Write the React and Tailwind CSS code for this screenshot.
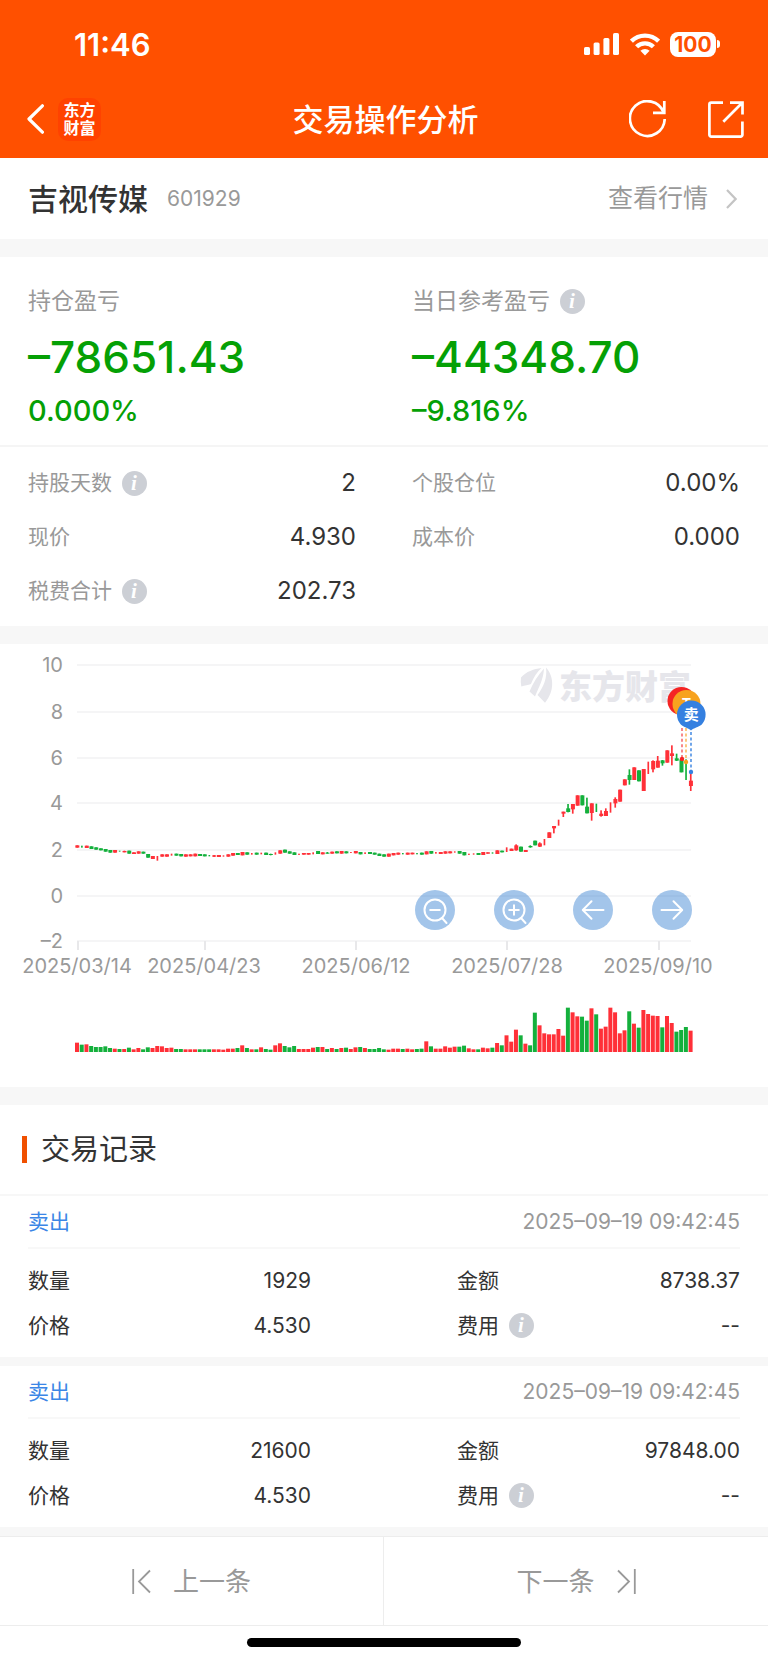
import React from 'react';

// [direction, volume, high, low, body top, body bottom]
// r = up day, g = down day. Without a body the whole range is filled.
const DAYS = [
  ['r', 28, 616, 623], ['g', 22, 617, 623, 620, 620], ['r', 23, 617, 624], ['g', 18, 619, 627], ['g', 15, 622, 629],
  ['g', 15, 625, 631], ['g', 17, 627, 635], ['g', 12, 630, 638], ['r', 10, 630, 638], ['g', 9, 632, 635, 634, 634],
  ['r', 9, 632, 637, 633, 637], ['g', 13, 632, 641], ['r', 8, 637, 642], ['r', 12, 634, 641], ['g', 8, 635, 641],
  ['g', 14, 642, 653], ['r', 12, 648, 657], ['r', 18, 648, 662, 655, 655], ['r', 17, 643, 650], ['r', 12, 643, 650],
  ['r', 13, 641, 647, 644, 644], ['g', 9, 641, 647], ['g', 9, 642, 649], ['r', 8, 643, 650], ['r', 8, 643, 649],
  ['r', 8, 641, 649], ['g', 8, 642, 648], ['g', 8, 643, 649], ['g', 8, 645, 649, 647, 647], ['r', 8, 645, 651, 646, 650],
  ['r', 8, 645, 651], ['r', 7, 646, 650, 648, 648], ['r', 10, 643, 650], ['r', 10, 639, 647], ['g', 12, 639, 645],
  ['r', 20, 636, 646], ['g', 12, 637, 644], ['r', 8, 639, 644, 641, 641], ['g', 8, 638, 644], ['r', 14, 638, 643, 641, 641],
  ['g', 9, 638, 645], ['g', 7, 641, 646, 642, 645], ['r', 20, 637, 644, 640, 640], ['r', 26, 631, 641], ['g', 18, 629, 638],
  ['g', 14, 634, 641], ['g', 18, 637, 645], ['r', 9, 641, 645, 643, 643], ['r', 9, 639, 644], ['r', 9, 639, 644],
  ['r', 13, 637, 643, 640, 640], ['g', 15, 633, 642], ['r', 15, 637, 643], ['g', 9, 636, 641, 638, 641], ['r', 12, 635, 641],
  ['g', 9, 634, 640], ['r', 12, 633, 641], ['g', 13, 634, 640], ['r', 9, 636, 639, 637, 637], ['r', 14, 633, 640],
  ['g', 15, 636, 643], ['r', 12, 637, 642, 640, 640], ['g', 9, 636, 642], ['g', 9, 638, 644], ['g', 12, 641, 648],
  ['g', 8, 643, 650], ['r', 7, 641, 650], ['r', 10, 639, 646], ['r', 10, 638, 644], ['g', 9, 639, 643, 641, 641],
  ['r', 10, 638, 644], ['r', 8, 638, 643], ['g', 9, 639, 643, 641, 641], ['g', 10, 638, 644], ['r', 32, 634, 643],
  ['g', 17, 633, 641], ['r', 10, 636, 641, 638, 638], ['r', 10, 636, 642], ['r', 17, 634, 641], ['r', 13, 634, 640],
  ['r', 16, 634, 638, 636, 636], ['g', 16, 633, 641], ['g', 19, 636, 646], ['r', 11, 641, 645, 643, 643], ['r', 8, 640, 644, 642, 642],
  ['g', 8, 639, 645], ['r', 13, 636, 645], ['r', 11, 637, 641], ['g', 13, 637, 641, 639, 639], ['r', 27, 631, 642],
  ['g', 20, 632, 637], ['r', 50, 622, 636, 629, 629], ['r', 31, 626, 633], ['r', 67, 613, 632, 616, 631], ['g', 50, 620, 635],
  ['r', 25, 630, 636], ['g', 20, 616, 623, 618, 622], ['g', 118, 602, 616], ['r', 80, 607, 621, 610, 620], ['r', 56, 597, 616, 606, 606],
  ['r', 53, 577, 594], ['r', 53, 558, 580, 558, 565], ['r', 69, 539, 557, 548, 548], ['r', 49, 515, 531, 515, 521], ['g', 133, 492, 517, 505, 516],
  ['r', 119, 492, 521, 492, 508], ['r', 107, 466, 497], ['g', 106, 466, 496], ['g', 94, 473, 520, 500, 520], ['r', 131, 490, 542, 490, 519],
  ['g', 113, 491, 516, 503, 503], ['r', 70, 511, 530, 521, 528], ['r', 76, 505, 528, 513, 528], ['r', 133, 487, 518, 502, 502], ['r', 119, 472, 503, 477, 490],
  ['r', 56, 449, 485], ['r', 65, 418, 436], ['g', 122, 388, 434, 405, 420], ['r', 85, 382, 420], ['g', 73, 391, 424],
  ['r', 126, 387, 453], ['r', 114, 365, 402, 380, 380], ['r', 109, 361, 397, 363, 388], ['r', 108, 348, 383, 362, 383], ['g', 74, 360, 377, 361, 370],
  ['r', 108, 331, 368], ['r', 87, 316, 376, 340, 348], ['g', 61, 341, 363, 355, 362], ['g', 66, 358, 397], ['g', 75, 358, 420, 390, 390],
  ['r', 64, 402, 453, 422, 438],
];

const Y_AXIS = [
  ['10', 21], ['8', 68], ['6', 114], ['4', 159], ['2', 206], ['0', 252], ['–2', 297],
];

const X_AXIS = [
  ['2025/03/14', 78, 77], ['2025/04/23', 205, 204], ['2025/06/12', 356, 356], ['2025/07/28', 507, 507], ['2025/09/10', 659, 658],
];

const RECORDS = [
  { side: '卖出', time: '2025–09–19 09:42:45', qty: '1929', price: '4.530', amount: '8738.37', fee: '--' },
  { side: '卖出', time: '2025–09–19 09:42:45', qty: '21600', price: '4.530', amount: '97848.00', fee: '--' },
];

function Info() {
  return (
    <button
      aria-label="说明"
      className="flex size-[25px] shrink-0 items-center justify-center rounded-full bg-[#cccfd5] pr-px font-['Liberation_Serif',serif] text-[21px] leading-none font-bold text-white italic"
    >
      i
    </button>
  );
}

function StatusBar() {
  return (
    <div className="flex h-[88px] items-center justify-between pr-12 pl-[74px]">
      <span className="text-[31px] leading-none font-semibold">11:46</span>
      <div className="flex items-center gap-[10px]">
        <svg width="36" height="24" viewBox="0 0 36 24" fill="currentColor">
          <rect x="0" y="15" width="6" height="8" rx="1.6" />
          <rect x="9.6" y="10.5" width="6" height="12.5" rx="1.6" />
          <rect x="19.4" y="6" width="6" height="17" rx="1.6" />
          <rect x="29" y="1" width="6" height="22" rx="1.6" />
        </svg>
        <svg width="30" height="24" viewBox="0 0 30 24" fill="none" stroke="currentColor" strokeWidth="4.4">
          <path d="M1.4 9.2a19.3 19.3 0 0 1 27.2 0" />
          <path d="M6.6 14.8a12 12 0 0 1 16.8 0" />
          <path d="M10.4 18.8a6.5 6.5 0 0 1 9.2 0L15 23.4z" fill="currentColor" stroke="none" />
        </svg>
        <div className="flex items-center gap-px">
          <span className="flex h-[25px] w-[46px] items-center justify-center rounded-lg bg-white text-[21px] leading-none font-bold text-[#ff5000]">
            100
          </span>
          <span className="h-2 w-[3px] rounded-r-full bg-white" />
        </div>
      </div>
    </div>
  );
}

function NavBar() {
  return (
    <div className="grid h-[70px] grid-cols-[1fr_auto_1fr] items-center pr-6 pb-2 pl-[27px]">
      <div className="flex items-center gap-[14px]">
        <button aria-label="返回">
          <svg width="17" height="30" viewBox="0 0 17 30" fill="none" stroke="currentColor" strokeWidth="3.2" strokeLinecap="round" strokeLinejoin="round">
            <path d="M15.4 1.8L2 15l13.4 13.2" />
          </svg>
        </button>
        <span className="flex size-[43px] items-center justify-center rounded-[10px] bg-[#ff4200] text-center text-[16px] leading-[18px] font-bold">
          东方
          <br />
          财富
        </span>
      </div>
      <h1 className="text-[31px] leading-none font-medium">交易操作分析</h1>
      <div className="flex items-center justify-end gap-[42px]">
        <button aria-label="刷新">
          <svg width="37" height="38" viewBox="0 0 37 38" fill="none" stroke="currentColor" strokeWidth="2.7">
            <path d="M35.7 19A17.4 17.4 0 1 1 34.6 12.4" />
            <path d="M35.3 1v11.8H24" />
          </svg>
        </button>
        <button aria-label="分享">
          <svg width="36" height="37" viewBox="0 0 36 37" fill="none" stroke="currentColor" strokeWidth="2.7">
            <path d="M15 1.6H3.2a1.8 1.8 0 0 0-1.8 1.8v30.4a1.8 1.8 0 0 0 1.8 1.8h29.4a1.8 1.8 0 0 0 1.8-1.8V20.5" />
            <path d="M22 1.6h12.5v12M34 2L15.3 20.8" />
          </svg>
        </button>
      </div>
    </div>
  );
}

function Profit({ label, info, amount, percent }) {
  return (
    <div>
      <div className="flex h-7 items-center gap-[10px] text-[23px] text-[#999]">
        {label}
        {info && <Info />}
      </div>
      <p className="mt-4 text-[44px] leading-[52px] font-medium text-[#05a005]">{amount}</p>
      <p className="mt-[10px] text-[29px] leading-9 font-medium text-[#05a005]">{percent}</p>
    </div>
  );
}

function Stat({ label, info, value }) {
  return (
    <div className="flex h-[54px] items-center justify-between">
      <dt className="flex items-center gap-[10px] text-[21px] text-[#999]">
        {label}
        {info && <Info />}
      </dt>
      <dd className="text-[24px] text-[#333]">{value}</dd>
    </div>
  );
}

function RoundButton({ label, children }) {
  return (
    <button aria-label={label} className="size-10 rounded-full bg-[#337fd0]/45 text-white">
      <svg viewBox="0 0 40 40" fill="none" stroke="currentColor" strokeWidth="2" strokeLinecap="round" strokeLinejoin="round">
        {children}
      </svg>
    </button>
  );
}

function Chart() {
  return (
    <section className="relative bg-white">
      <svg viewBox="0 0 768 443" className="block w-full">
        <g fill="#999" fontSize="20">
          {Y_AXIS.map(([label, y]) => (
            <g key={label}>
              <line x1="77" x2="691" y1={y} y2={y} stroke="#f5f5f6" strokeWidth="2" />
              <text x="63" y={y + 7} textAnchor="end">{label}</text>
            </g>
          ))}
          {X_AXIS.map(([label, tick, x]) => (
            <g key={label}>
              <line x1={tick} x2={tick} y1="297" y2="306" stroke="#e8e8ea" strokeWidth="2" />
              <text x={x} y="329" textAnchor="middle">{label}</text>
            </g>
          ))}
        </g>

        {/* watermark */}
        <g fill="#e6e6eb">
          <path d="M541.500 24C534 25 526 27.500 521 33.500Q520.400 38 521.300 42.500C525 41.500 528 41 531 40C533.500 33.500 537 28 541.500 24z" />
          <path d="M544 24.500C538 31 533 39 529.500 47.500L535 52.500C539 43 543.500 35 544 24.500z" />
          <path d="M546 23.500C554 32 555 47 545 58.700L537.500 51C543.500 43 547.500 34 546 23.500z" />
          <text x="559" y="55" fontSize="33" fontWeight="900">东方财富</text>
        </g>

        <g transform="scale(0.33333) translate(231 -12)">
          {DAYS.map(([dir, vol, high, low, top = high, bottom = low], i) => {
            const x = i * 14.16;
            return (
              <g key={i} fill={dir === 'r' ? '#ff3038' : '#14b03c'}>
                <rect x={x - 2} y={high} width="5" height={low - high} />
                <rect x={x - 5} y={top} width="12" height={bottom - top} />
                <rect x={x - 6} y={1236 - vol} width="12" height={vol} />
              </g>
            );
          })}
        </g>

        {/* trade markers */}
        <g strokeWidth="1.4" strokeDasharray="3 2.4">
          <line x1="682" x2="682" y1="84" y2="113" stroke="#f5565c" />
          <line x1="686" x2="686" y1="84" y2="116" stroke="#f9b24a" />
          <line x1="691" x2="691" y1="88" y2="126" stroke="#3580e0" />
        </g>
        <circle cx="682" cy="115" r="2.2" fill="#f52424" />
        <circle cx="686" cy="118" r="2.2" fill="#f7a21f" />
        <circle cx="691" cy="128" r="2.2" fill="#3580e0" />
        <circle cx="681.5" cy="57" r="14" fill="#f52424" />
        <circle cx="686.5" cy="60" r="14" fill="#f7a21f" />
        <text x="686.5" y="65" textAnchor="middle" fontSize="14" fontWeight="700" fill="#fff">T</text>
        <path d="M691 86.500C688 83.500 684 83.500 680.800 80.400A14.300 14.300 0 1 1 701.800 80.400C698 83.500 694 83.500 691 86.500z" fill="#3580e0" />
        <text x="691.300" y="76" textAnchor="middle" fontSize="15" fontWeight="700" fill="#fff">卖</text>
      </svg>

      <div className="absolute top-[246px] right-[76px] flex gap-[39px]">
        <RoundButton label="缩小">
          <circle cx="20" cy="20" r="10.500" />
          <path d="M27 28l4.500 5M15.200 20h9.600" />
        </RoundButton>
        <RoundButton label="放大">
          <circle cx="20" cy="20" r="10.500" />
          <path d="M27 28l4.500 5M15.200 20h9.600M20 15.200v9.600" />
        </RoundButton>
        <RoundButton label="左移">
          <path d="M30.500 20H10M18.500 11.300L9.800 20l8.700 8.700" />
        </RoundButton>
        <RoundButton label="右移">
          <path d="M9.500 20H30M21.500 11.300l8.700 8.700-8.700 8.700" />
        </RoundButton>
      </div>
    </section>
  );
}

function Field({ label, info, value }) {
  return (
    <div className="flex h-[45px] items-center justify-between">
      <dt className="flex items-center gap-[10px]">
        {label}
        {info && <Info />}
      </dt>
      <dd>{value}</dd>
    </div>
  );
}

function Record({ record }) {
  return (
    <article className="border-b-9 border-[#f7f7f7] bg-white px-7 text-[21px] text-[#333]">
      <div className="flex h-[53px] items-center justify-between border-b-2 border-[#f8f8f8]">
        <span className="text-[#3b86e6]">{record.side}</span>
        <time className="text-[#999]">{record.time}</time>
      </div>
      <dl className="grid grid-cols-2 gap-x-[146px] pt-[9px] pb-[9px]">
        <Field label="数量" value={record.qty} />
        <Field label="金额" value={record.amount} />
        <Field label="价格" value={record.price} />
        <Field label="费用" info value={record.fee} />
      </dl>
    </article>
  );
}

export default function App() {
  return (
    <div className="min-h-screen bg-white font-['Inter','Noto_Sans_CJK_SC',sans-serif]">
      <header className="bg-[#ff5000] text-white">
        <StatusBar />
        <NavBar />
      </header>

      <main>
        <section className="flex h-[81px] items-center justify-between px-7">
          <div className="flex items-center gap-[19px]">
            <h2 className="text-[30px] leading-none font-medium text-[#333]">吉视传媒</h2>
            <span className="text-[21px] text-[#999]">601929</span>
          </div>
          <a href="#quote" className="flex items-center gap-[18px] pr-[3px] text-[25px] text-[#999]">
            查看行情
            <svg width="11" height="20" viewBox="0 0 11 20" fill="none" stroke="#c4c4c4" strokeWidth="2.2">
              <path d="M1 1l8.600 9L1 19" />
            </svg>
          </a>
        </section>

        <section className="border-y-18 border-[#f7f7f7]">
          <div className="grid grid-cols-2 gap-x-14 border-b-2 border-[#f5f5f5] px-7 pt-[30px] pb-4">
            <Profit label="持仓盈亏" amount="–78651.43" percent="0.000%" />
            <Profit label="当日参考盈亏" info amount="–44348.70" percent="–9.816%" />
          </div>
          <dl className="grid grid-cols-2 gap-x-14 px-7 pt-[9px] pb-2">
            <Stat label="持股天数" info value="2" />
            <Stat label="个股仓位" value="0.00%" />
            <Stat label="现价" value="4.930" />
            <Stat label="成本价" value="0.000" />
            <Stat label="税费合计" info value="202.73" />
          </dl>
        </section>

        <Chart />

        <section className="border-t-18 border-[#f7f7f7]">
          <div className="flex h-[91px] items-center gap-[14px] border-b-2 border-[#f7f7f7] pl-[22px]">
            <span className="h-[27px] w-[5px] bg-[#f05000]" />
            <h2 className="text-[29px] leading-none text-[#333]">交易记录</h2>
          </div>
          {RECORDS.map((record) => (
            <Record key={record.qty} record={record} />
          ))}
        </section>
      </main>

      <footer>
        <nav className="grid h-[90px] grid-cols-2 border-y border-[#ededed] text-[26px] text-[#999]">
          <button className="flex items-center justify-center gap-[22px] border-r border-[#ededed]">
            <svg width="19" height="25" viewBox="0 0 19 25" fill="none" stroke="currentColor" strokeWidth="1.800">
              <path d="M1.200 0v25M18 1.500L7 12.500l11 11" />
            </svg>
            上一条
          </button>
          <button className="flex items-center justify-center gap-[22px]">
            下一条
            <svg width="19" height="25" viewBox="0 0 19 25" fill="none" stroke="currentColor" strokeWidth="1.800">
              <path d="M17.800 0v25M1 1.500l11 11-11 11" />
            </svg>
          </button>
        </nav>
        <div className="mx-auto mt-3 mb-[15px] h-[9px] w-[274px] rounded-full bg-black" />
      </footer>
    </div>
  );
}
